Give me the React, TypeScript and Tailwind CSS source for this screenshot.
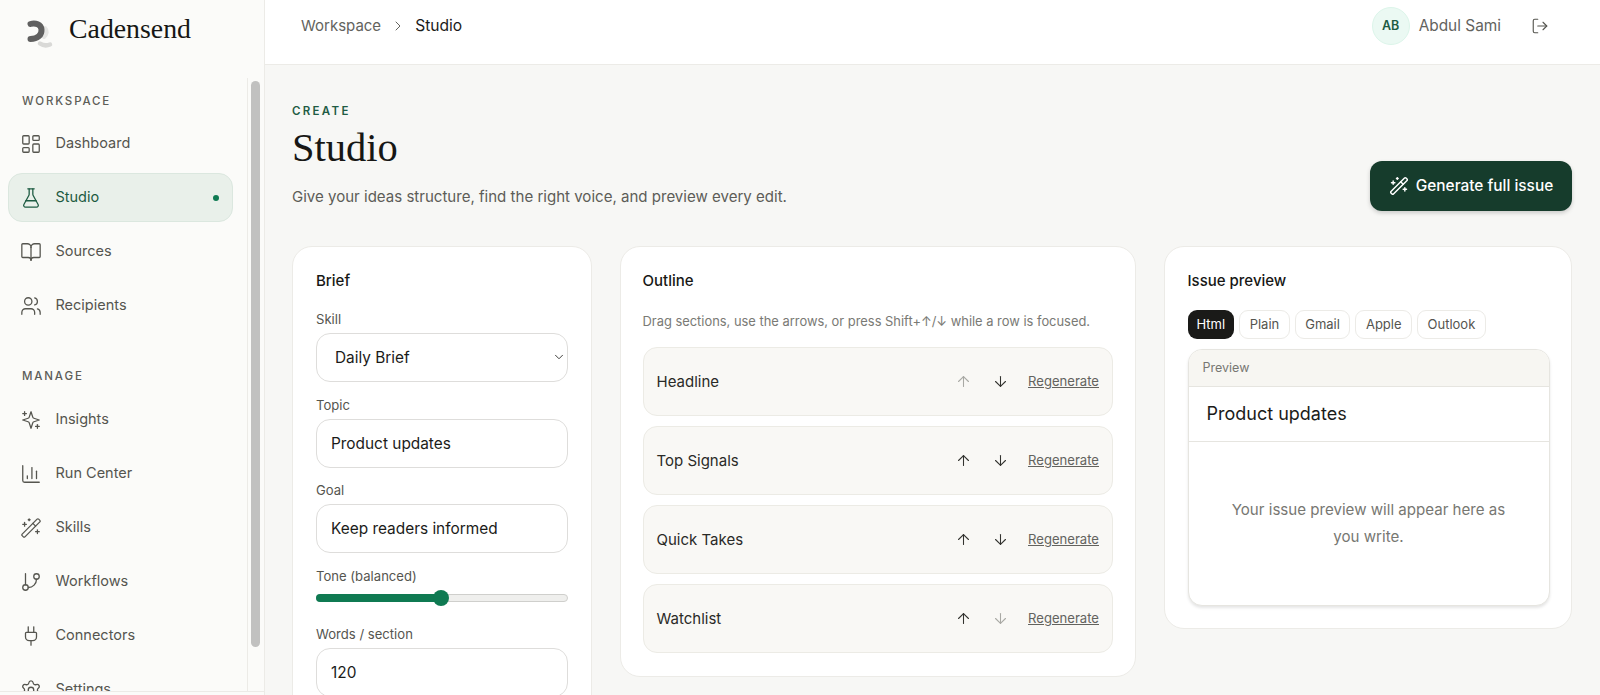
import {
  ArrowDown,
  ArrowUp,
  BookOpen,
  ChartColumn,
  ChevronDown,
  ChevronRight,
  FlaskConical,
  GitBranch,
  LayoutDashboard,
  LogOut,
  Plug,
  Settings,
  Users,
  WandSparkles,
} from "lucide-react";

// star with a plus at top-left and bottom-right, the lucide one has them elsewhere
function InsightsIcon({ size, strokeWidth, className }: { size?: number | string; strokeWidth?: number | string; className?: string }) {
  return (
    <svg
      width={size}
      height={size}
      viewBox="0 0 24 24"
      fill="none"
      stroke="currentColor"
      strokeWidth={strokeWidth}
      strokeLinecap="round"
      strokeLinejoin="round"
      className={className}
    >
      <path d="m12 3-1.912 5.813a2 2 0 0 1-1.275 1.275L3 12l5.813 1.912a2 2 0 0 1 1.275 1.275L12 21l1.912-5.813a2 2 0 0 1 1.275-1.275L21 12l-5.813-1.912a2 2 0 0 1-1.275-1.275L12 3Z" />
      <path d="M5 3v4" />
      <path d="M19 17v4" />
      <path d="M3 5h4" />
      <path d="M17 19h4" />
    </svg>
  );
}

const workspaceNav = [
  { label: "Dashboard", icon: LayoutDashboard },
  { label: "Studio", icon: FlaskConical, active: true },
  { label: "Sources", icon: BookOpen },
  { label: "Recipients", icon: Users },
];

const manageNav = [
  { label: "Insights", icon: InsightsIcon },
  { label: "Run Center", icon: ChartColumn },
  { label: "Skills", icon: WandSparkles },
  { label: "Workflows", icon: GitBranch },
  { label: "Connectors", icon: Plug },
  { label: "Settings", icon: Settings },
];

const outline = [
  { label: "Headline", upOff: true },
  { label: "Top Signals" },
  { label: "Quick Takes" },
  { label: "Watchlist", downOff: true },
];

const tabs = ["Plain", "Gmail", "Apple", "Outlook"];

type NavEntry = {
  label: string;
  icon: React.ComponentType<{ size?: number | string; strokeWidth?: number | string; className?: string }>;
  active?: boolean;
};

function NavItem({ item }: { item: NavEntry }) {
  const Icon = item.icon;
  if (item.active) {
    return (
      <div className="flex h-[49px] items-center rounded-[14px] border border-[#dbe7df] bg-[#e9f0ea] pl-[11px] pr-[13px] text-[#1d5b42]">
        <Icon size={22} strokeWidth={1.4} className="shrink-0" />
        <span className="ml-[13.5px] flex-1 text-[14.5px] leading-none">{item.label}</span>
        <span className="h-[6px] w-[6px] rounded-full bg-[#0f7a52]" />
      </div>
    );
  }
  return (
    <div className="flex h-[49px] items-center border border-transparent pl-[11px] text-[#55554f]">
      <Icon size={22} strokeWidth={1.4} className="shrink-0" />
      <span className="ml-[13.5px] text-[14.5px] leading-none">{item.label}</span>
    </div>
  );
}

function Field({ label, children }: { label: string; children: React.ReactNode }) {
  return (
    <div>
      <label className="block text-[13.1px] leading-[16px] text-[#55554f]">{label}</label>
      <div className="mt-[6px]">{children}</div>
    </div>
  );
}

function TextInput({ value }: { value: string }) {
  return (
    <input
      defaultValue={value}
      className="block h-[49px] w-full rounded-[14px] border border-[#dedddb] bg-white px-[14px] text-[15.4px] text-[#1b1b19] outline-none"
    />
  );
}

export default function App() {
  return (
    <div className="flex h-screen overflow-hidden bg-[#f7f7f5] font-['Inter',sans-serif] text-[#1b1b19]">
      {/* Sidebar */}
      <aside className="flex w-[265px] shrink-0 flex-col border-r border-[#ecebe7] bg-[#fbfbf9]">
        <div className="flex h-[78px] shrink-0 items-start pl-[20px] pt-[12px]">
          <svg width="40" height="40" viewBox="20 12 40 40" className="block shrink-0">
            <path d="M45 28c3 3 2 6-1 9" fill="none" stroke="#e6e6e4" strokeWidth="4" strokeLinecap="round" />
            <path d="M40 43.500c3 2 7 2.200 10 1" fill="none" stroke="#d9d9d7" strokeWidth="4.500" strokeLinecap="round" />
            <path
              d="M30.500 24c5-1.500 10.500.5 11 5.500.5 5.500-4 9.500-11 9.500"
              fill="none"
              stroke="#606060"
              strokeWidth="6"
              strokeLinecap="round"
            />
          </svg>
          <span className="ml-[9px] mt-[1px] font-['Liberation_Serif',serif] text-[27.8px] leading-[32px] text-[#171715]">
            Cadensend
          </span>
        </div>
        <div className="flex min-h-0 flex-1 border-b border-[#ecebe7]">
          <nav className="min-w-0 flex-1 overflow-hidden border-r border-[#ecebe7] pl-[8px] pr-[14px]">
            <div className="pl-[14px] pt-[16px] text-[11.5px] font-medium leading-[14px] tracking-[0.16em] text-[#5d5d58]">
              WORKSPACE
            </div>
            <div className="mt-[11px] flex flex-col gap-[5px]">
              {workspaceNav.map((item) => (
                <NavItem key={item.label} item={item} />
              ))}
            </div>
            <div className="pl-[14px] pt-[39px] text-[11.5px] font-medium leading-[14px] tracking-[0.16em] text-[#5d5d58]">
              MANAGE
            </div>
            <div className="mt-[12px] flex flex-col gap-[5px]">
              {manageNav.map((item) => (
                <NavItem key={item.label} item={item} />
              ))}
            </div>
          </nav>
          <div className="w-[16px] shrink-0 pl-[3px] pt-[3px]">
            <div className="h-[566px] w-[9px] rounded-full bg-[#c1c1c0]" />
          </div>
        </div>
        <div className="h-[3px] shrink-0" />
      </aside>

      <div className="flex min-w-0 flex-1 flex-col">
        {/* Top bar */}
        <header className="h-[65px] shrink-0 border-b border-[#ecebe7] bg-white">
          <div className="flex h-[52px] items-center pl-[36px] pr-[51px] text-[15px]">
            <span className="text-[#63635e]">Workspace</span>
            <ChevronRight size={16} strokeWidth={1.5} className="mx-[9px] text-[#63635e]" />
            <span className="text-[15.6px] text-[#1b1b19]">Studio</span>
            <div className="ml-auto flex items-center">
              <div className="flex h-[38px] w-[38px] items-center justify-center rounded-full border border-[#dcf5ea] bg-[#ebf9f3] text-[12.5px] font-semibold text-[#1d5b42]">
                AB
              </div>
              <span className="ml-[9px] text-[15.4px] text-[#63635e]">Abdul Sami</span>
              <LogOut size={18} strokeWidth={1.5} className="ml-[30px] text-[#55554f]" />
            </div>
          </div>
        </header>

        {/* Page */}
        <main className="min-h-0 flex-1 overflow-hidden pl-[27px] pr-[28px] pt-[39px]">
          <div className="flex items-end justify-between">
            <div>
              <div className="text-[11.5px] font-semibold leading-[14px] tracking-[0.2em] text-[#1f5c44]">CREATE</div>
              <h1 className="mt-[6px] font-['Liberation_Serif',serif] text-[40.5px] font-normal leading-[48px] text-[#171715]">
                Studio
              </h1>
              <p className="mt-[14px] text-[15.05px] leading-[22px] text-[#5d5d58]">
                Give your ideas structure, find the right voice, and preview every edit.
              </p>
            </div>
            <button className="mb-[-3px] flex h-[50px] w-[202px] items-center justify-center gap-[7px] rounded-[12px] bg-[#163c2c] text-[15.4px] font-medium text-white shadow-[0_2px_4px_rgba(0,0,0,0.18)]">
              <WandSparkles size={20} strokeWidth={1.75} />
              Generate full issue
            </button>
          </div>

          <div className="mt-[38px] grid grid-cols-[300px_516.5px_408px] items-start gap-[27.5px]">
            {/* Brief */}
            <section className="rounded-[20px] border border-[#ecebe7] bg-white px-[23px] pt-[24px] pb-[24px]">
              <h2 className="text-[15px] font-medium leading-[20px] text-[#171715]">Brief</h2>
              <div className="mt-[20px] flex flex-col gap-[14.5px]">
                <Field label="Skill">
                  <div className="relative">
                    <select className="block h-[49px] w-full appearance-none rounded-[14px] border border-[#dedddb] bg-white px-[18px] text-[15.4px] text-[#1b1b19] outline-none">
                      <option>Daily Brief</option>
                    </select>
                    <ChevronDown size={14} strokeWidth={1.6} className="absolute right-[2px] top-[17px] text-[#33332f]" />
                  </div>
                </Field>
                <Field label="Topic">
                  <TextInput value="Product updates" />
                </Field>
                <Field label="Goal">
                  <TextInput value="Keep readers informed" />
                </Field>
                <Field label="Tone (balanced)">
                  <div className="relative mb-[9.5px] pt-[4.500px]">
                    <div className="h-[8px] rounded-full border border-[#cfcfcc] bg-[#efefed]">
                      <div className="ml-[-1px] mt-[-1px] h-[8px] w-[126px] rounded-full bg-[#0f7a52]" />
                    </div>
                    <div className="absolute left-[117px] top-[0.500px] h-[16px] w-[16px] rounded-full bg-[#0f7a52]" />
                  </div>
                </Field>
                <Field label="Words / section">
                  <TextInput value="120" />
                </Field>
              </div>
            </section>

            {/* Outline */}
            <div className="flex flex-col gap-[18px]">
              <section className="rounded-[20px] border border-[#ecebe7] bg-white px-[22px] pt-[24px] pb-[23px]">
                <h2 className="text-[15px] font-medium leading-[20px] text-[#171715]">Outline</h2>
                <p className="mt-[21px] text-[12.9px] leading-[20px] text-[#7a7a75]">
                  Drag sections, use the arrows, or press Shift+↑/↓ while a row is focused.
                </p>
                <div className="mt-[15px] flex flex-col gap-[10px]">
                  {outline.map((row) => (
                    <div
                      key={row.label}
                      className="flex h-[69px] items-center rounded-[14px] border border-[#ecebe5] bg-[#f9f8f5] pl-[13px] pr-[13px]"
                    >
                      <span className="flex-1 pt-[2px] text-[15px] text-[#2a2a27]">{row.label}</span>
                      <ArrowUp size={17} strokeWidth={1.5} className={row.upOff ? "text-[#a9a9a4]" : "text-[#33332f]"} />
                      <ArrowDown
                        size={17}
                        strokeWidth={1.5}
                        className={`ml-[20px] ${row.downOff ? "text-[#a9a9a4]" : "text-[#33332f]"}`}
                      />
                      <span className="ml-[19px] text-[13.1px] text-[#63635e] underline">Regenerate</span>
                    </div>
                  ))}
                </div>
              </section>
              <section className="h-[120px] rounded-[20px] border border-[#ecebe7] bg-white" />
            </div>

            {/* Preview */}
            <section className="rounded-[20px] border border-[#ecebe7] bg-white pl-[23px] pr-[21px] pt-[24px] pb-[22px]">
              <h2 className="text-[15px] font-medium leading-[20px] text-[#171715]">Issue preview</h2>
              <div className="mt-[19px] flex gap-[5px]">
                <span className="flex h-[29px] items-center rounded-[9px] bg-[#1a1a18] px-[9px] text-[13px] text-white">Html</span>
                {tabs.map((tab) => (
                  <span
                    key={tab}
                    className="flex h-[29px] items-center rounded-[9px] border border-[#ecebe7] bg-white px-[9.5px] text-[13px] text-[#55554f]"
                  >
                    {tab}
                  </span>
                ))}
              </div>
              <div className="mt-[10px] overflow-hidden rounded-[14px] border border-[#e6e5e0] bg-white shadow-[0_2px_3px_rgba(0,0,0,0.1)]">
                <div className="flex h-[37px] items-center border-b border-[#e6e5e0] bg-[#f7f6f2] px-[14px] text-[12.5px] text-[#777772]">
                  Preview
                </div>
                <div className="flex h-[55px] items-center border-b border-[#e6e5e0] px-[18px] pb-[1px] text-[18px] text-[#1b1b19]">
                  Product updates
                </div>
                <div className="flex h-[163px] items-center justify-center px-[32px] pb-[2px] text-center text-[15.1px] leading-[27px] text-[#777772]">
                  Your issue preview will appear here as you write.
                </div>
              </div>
            </section>
          </div>
        </main>
      </div>
    </div>
  );
}
